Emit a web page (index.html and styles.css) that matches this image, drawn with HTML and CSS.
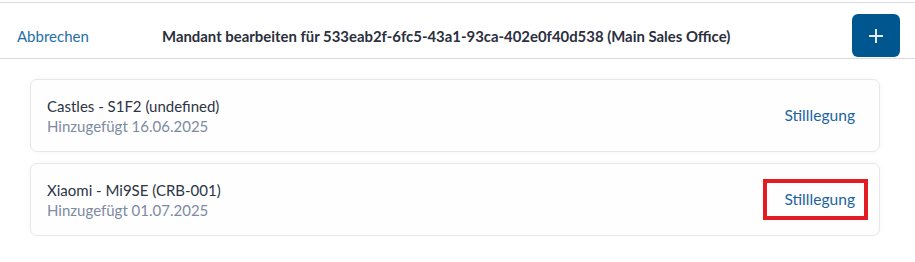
FILE: index.html
```html
<!DOCTYPE html>
<html lang="de">
<head>
<meta charset="utf-8">
<title>Mandant bearbeiten</title>
<link rel="stylesheet" href="styles.css">
</head>
<body>
<div class="page">
  <header class="header">
    <a class="cancel" href="#">Abbrechen</a>
    <h1 class="title">Mandant bearbeiten für 533eab2f-6fc5-43a1-93ca-402e0f40d538 (Main Sales Office)</h1>
    <button class="add" type="button" aria-label="Hinzufügen">
      <svg width="16" height="16" viewBox="0 0 16 16"><path d="M8 1v14M1 8h14" stroke="#e2ebf3" stroke-width="2" fill="none"/></svg>
    </button>
  </header>
  <main class="list">
    <div class="card">
      <div class="info">
        <div class="name">Castles - S1F2 (undefined)</div>
        <div class="date">Hinzugefügt 16.06.2025</div>
      </div>
      <a class="action" href="#">Stilllegung</a>
    </div>
    <div class="card">
      <div class="info">
        <div class="name">Xiaomi - Mi9SE (CRB-001)</div>
        <div class="date">Hinzugefügt 01.07.2025</div>
      </div>
      <a class="action highlighted" href="#">Stilllegung</a>
    </div>
  </main>
</div>
</body>
</html>
```
FILE: styles.css
```css
html, body {
  margin: 0;
  padding: 0;
  background: #ffffff;
}
body {
  font-family: Lato, "Noto Sans", sans-serif;
}
.page {
  padding-top: 2px;
}
.header {
  display: flex;
  align-items: center;
  border-top: 1px solid #dddbe7;
  border-bottom: 1px solid #d9d7e4;
  padding: 11px 15px 0 17px;
  height: 44px;
}
.cancel {
  color: #1f6ea6;
  text-decoration: none;
  font-size: 15px;
  width: 145px;
}
.title {
  flex: 1;
  margin: 0;
  font-size: 14.9px;
  font-weight: 700;
  color: #2b2f3e;
}
.add {
  width: 48px;
  height: 43px;
  border: none;
  border-radius: 6px;
  background: #00568f;
  display: flex;
  align-items: center;
  justify-content: center;
  padding: 0;
  align-self: flex-start;
}
.add svg {
  display: block;
}
.list {
  display: flex;
  flex-direction: column;
  gap: 11px;
  padding: 20px 35px 0 30px;
}
.card {
  display: flex;
  align-items: center;
  justify-content: space-between;
  height: 71px;
  border: 1px solid #e5e7eb;
  border-radius: 7px;
  background: #fefefe;
  box-shadow: 0 0 6px rgba(0, 0, 0, 0.04);
  padding: 0 11px 0 16px;
}
.info {
  display: flex;
  flex-direction: column;
  font-size: 15px;
  line-height: 20px;
}
.name {
  color: #2c3445;
}
.date {
  color: #7d8aa2;
}
.action {
  color: #1b64a1;
  text-decoration: none;
  font-size: 15.6px;
  line-height: 33px;
  padding: 0 9px 0 17px;
  border: 4px solid transparent;
}
.action.highlighted {
  border-color: #e31b23;
}
```
